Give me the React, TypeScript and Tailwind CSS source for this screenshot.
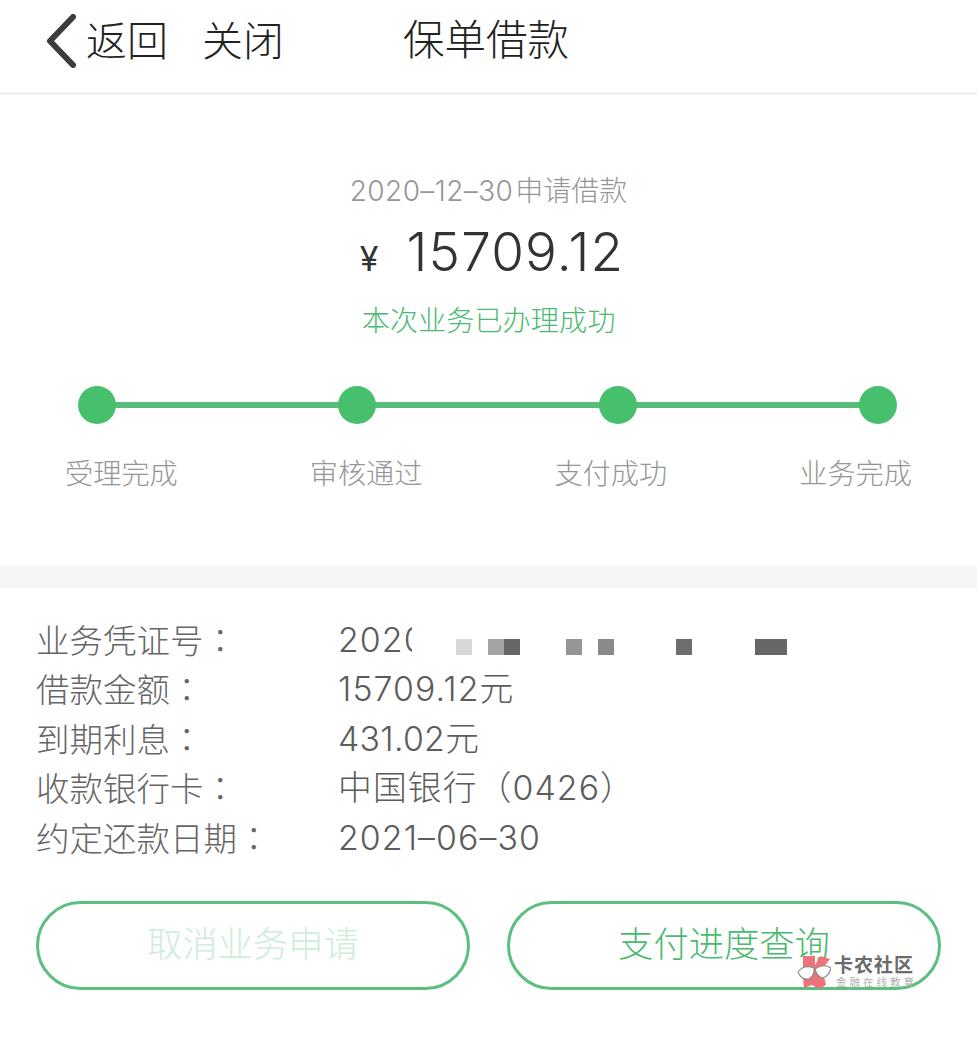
const stack = '"Inter","Noto Sans CJK SC",sans-serif';

const steps = ["受理完成", "审核通过", "支付成功", "业务完成"];

function Row({ label, children }: { label: string; children: React.ReactNode }) {
  return (
    <div className="flex h-[49.5px] items-center">
      <div className="w-[302px] shrink-0 text-[33.5px] font-light text-[#666666]">
        {label}
        <span className="font-['Noto_Sans_CJK_TC']">{"\uFF1A"}</span>
      </div>
      <div className="flex items-center pt-[1px] text-[33.8px] font-light tracking-[1.1px] text-[#5c5c5c]">{children}</div>
    </div>
  );
}

export default function App() {
  return (
    <div className="relative h-[1042px] w-[977px] overflow-hidden bg-white" style={{ fontFamily: stack }}>
      <header className="relative flex h-[95px] items-center border-b-[3px] border-[#f1f1f1] pb-[10px]">
        <svg className="ml-[45px] h-[54px] w-[32px]" viewBox="0 0 32 54" fill="none">
          <path d="M28 3 L5 27 L28 51" stroke="#3d3d3d" strokeWidth="6" strokeLinecap="round" strokeLinejoin="round" />
        </svg>
        <span className="ml-[9px] text-[41px] font-light leading-none text-[#222222]">返回</span>
        <span className="ml-[34px] text-[41px] font-light leading-none text-[#222222]">关闭</span>
        <span className="ml-[119px] text-[41.5px] font-light leading-none text-[#222222]">保单借款</span>
      </header>

      <section className="flex h-[471px] flex-col">
        <div className="mt-[76px] flex h-[40px] items-center justify-center text-[28px] font-light text-[#969696]">
          <span className="tracking-[0.4px]">2020–12–30</span>
          <span className="ml-[2px]">申请借款</span>
        </div>
        <div className="mt-[11px] flex h-[60px] items-center justify-center pl-[7px] text-[#333333]">
          <span className="mt-[14px] text-[34px] leading-none">¥</span>
          <span className="ml-[28px] text-[53px] font-light leading-none tracking-[1.2px]">15709.12</span>
        </div>
        <div className="mt-[19px] h-[40px] text-center text-[28.2px] leading-[40px] font-light text-[#4bb971]">本次业务已办理成功</div>

        <div className="relative ml-[78px] mr-[80px] mt-[45px] flex h-[38px] items-center justify-between">
          <div className="absolute inset-x-[10px] top-[16px] h-[6px] bg-[#58bd7a]" />
          {steps.map((s) => (
            <div key={s} className="relative h-[38px] w-[38px] rounded-full bg-[#46c06d]" />
          ))}
        </div>
        <div className="mx-[65px] mt-[30px] flex justify-between text-[28.2px] font-light leading-[40px] text-[#969696]">
          {steps.map((s) => (
            <span key={s}>{s}</span>
          ))}
        </div>
      </section>

      <div className="h-[22px] bg-[#f5f5f5]" />

      <section className="px-[36px] pt-[27px]">
        <Row label="业务凭证号">
          <span className="w-[74px] overflow-hidden whitespace-nowrap">2020</span>
          <span className="ml-[44px] mt-[14px] flex h-[16px]">
            <i className="h-4 w-4 bg-[#d8d8d8]" />
            <i className="ml-4 h-4 w-4 bg-[#a3a3a3]" />
            <i className="h-4 w-4 bg-[#666666]" />
            <i className="ml-[46px] h-4 w-4 bg-[#959595]" />
            <i className="ml-4 h-4 w-4 bg-[#8a8a8a]" />
            <i className="ml-[62px] h-4 w-4 bg-[#6e6e6e]" />
            <i className="ml-[63px] h-4 w-8 bg-[#676767]" />
          </span>
        </Row>
        <Row label="借款金额">15709.12元</Row>
        <Row label="到期利息"><span className="tracking-[0.3px]">431.02元</span></Row>
        <Row label="收款银行卡">{"中国银行\uFF080426\uFF09"}</Row>
        <Row label="约定还款日期">2021–06–30</Row>
      </section>

      <div className="mx-[36px] mt-[38px] flex justify-between">
        <button className="h-[89px] w-[434px] rounded-full border-[3px] border-[#5cbf80] text-[35.3px] font-light text-[#cdeed9]">取消业务申请</button>
        <button className="h-[89px] w-[434px] rounded-full border-[3px] border-[#5cbf80] text-[35.3px] font-light text-[#4bb971]">支付进度查询</button>
      </div>

      <div className="absolute left-[797px] top-[955px] flex items-start">
        <svg width="34" height="35" viewBox="0 0 34 35">
          <path d="M6 1 L18 1 L18 10 L23 1 L33 4 L27 12 L27 22 L29 30 L22 34 L15 30 L7 33 L6 23 Z" fill="#ec7478" />
          <path d="M1 17 Q7 9 17 13 Q18 20 12 24 Q4 25 1 17 Z" fill="#fff" stroke="#8a8a8a" strokeWidth="1.1" />
          <path d="M18 14 Q26 8 34 13 Q32 21 26 23 Q20 22 18 14 Z" fill="#fff" stroke="#8a8a8a" strokeWidth="1.1" />
        </svg>
        <div className="ml-[3px] flex flex-col">
          <span className="text-[19px] font-bold leading-[21px] tracking-[1px] text-[#6b6b6b]">卡农社区</span>
          <span className="ml-[2px] text-[10.5px] leading-[14px] tracking-[3px] text-[#b0b0b0]">金融在线教育</span>
        </div>
      </div>
    </div>
  );
}
